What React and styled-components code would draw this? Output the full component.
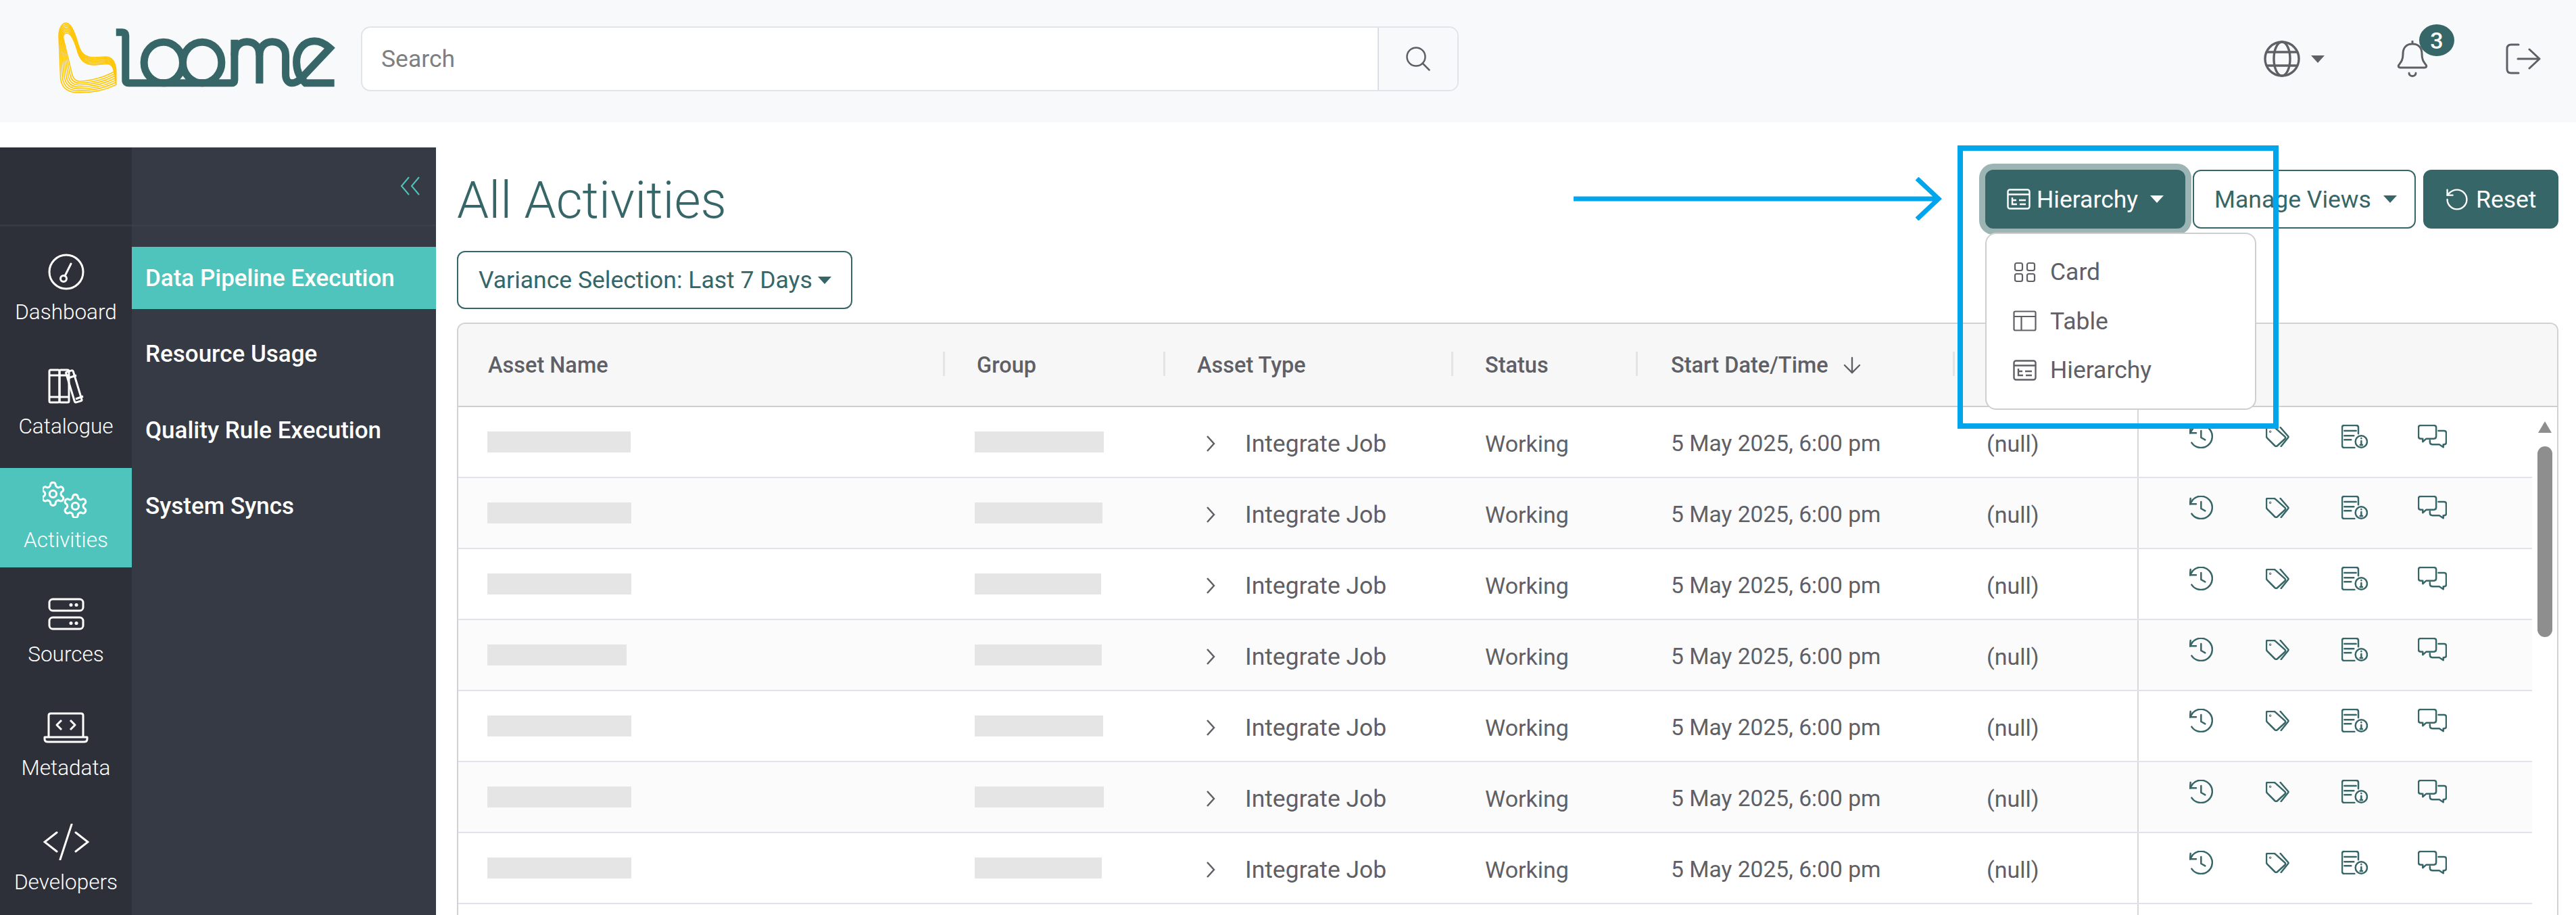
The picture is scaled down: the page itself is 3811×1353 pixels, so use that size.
import React from 'react';
import styled, { createGlobalStyle } from 'styled-components';
import { ArrowDown } from 'lucide-react';

const GlobalStyle = createGlobalStyle`
  html, body {
    margin: 0;
    padding: 0;
    height: 100%;
    overflow: hidden;
    background: #fff;
    font-family: Roboto, "Liberation Sans", sans-serif;
  }
  * { box-sizing: border-box; }
`;

const Page = styled.div`
  display: flex;
  flex-direction: column;
  height: 100vh;
  overflow: hidden;
`;

// Top bar
const TopBar = styled.header`
  flex: none;
  display: flex;
  align-items: center;
  height: 181px;
  padding: 0 0 7px 85px;
  background: #f8f9fb;
`;

const LogoSvg = styled.svg`
  flex: none;
  width: 412px;
  height: 107px;
  margin-right: 37px;
  margin-bottom: 3px;
`;

const SearchBox = styled.div`
  display: flex;
  width: 1624px;
  height: 96px;
  background: #fff;
  border: 2px solid #e2e4ea;
  border-radius: 14px;
`;

const SearchInput = styled.div`
  flex: 1;
  display: flex;
  align-items: center;
  padding-left: 28px;
  font-size: 35.5px;
  color: #7f7f7f;
`;

const SearchButton = styled.div`
  flex: none;
  display: flex;
  align-items: center;
  justify-content: center;
  width: 118px;
  background: #f8f9fb;
  border-left: 2px solid #dcdee5;
  border-radius: 0 12px 12px 0;
  color: #5f6066;
`;

const TopActions = styled.div`
  margin-left: auto;
  display: flex;
  align-items: center;
  padding-right: 52px;
`;

const Caret = styled.span`
  display: inline-block;
  width: 0;
  height: 0;
  border-left: 10px solid transparent;
  border-right: 10px solid transparent;
  border-top: 11px solid currentColor;
`;

const HierarchyCaret = styled(Caret)`
  margin-left: 9px;
`;

const GlobeWrap = styled.div`
  display: flex;
  align-items: center;
  gap: 16px;
  color: #5f6066;
  margin-right: 107px;
`;

const BellWrap = styled.div`
  position: relative;
  display: flex;
  margin-right: 115px;
  color: #5f6066;
`;

const Badge = styled.span`
  position: absolute;
  top: -24px;
  left: 33px;
  width: 52px;
  height: 47px;
  display: flex;
  align-items: center;
  justify-content: center;
  border-radius: 50%;
  background: #366667;
  color: #fff;
  font-size: 34px;
  font-weight: 500;
`;

// Body
const Content = styled.div`
  flex: 1;
  min-height: 0;
  display: flex;
  margin-top: 37px;
`;

const IconRail = styled.nav`
  flex: none;
  width: 195px;
  background: #2e3039;
`;

const RailTop = styled.div`
  height: 117px;
  border-bottom: 3px solid #363a45;
  margin-bottom: 20px;
`;

const RailItem = styled.div`
  height: 147px;
  margin-bottom: 21.5px;
  padding-top: 17px;
  display: flex;
  flex-direction: column;
  align-items: center;
  color: #fff;
  font-size: 31.5px;
  font-weight: 300;
  background: ${(p) => (p.$active ? '#4fc4bc' : 'transparent')};
`;

const RailIcon = styled.div`
  height: 60px;
  display: flex;
  align-items: center;
  justify-content: center;
  margin-bottom: 11px;
`;

const SubNav = styled.nav`
  flex: none;
  width: 450px;
  background: #363a45;
`;

const SubTop = styled.div`
  height: 117px;
  border-bottom: 3px solid #3b3f4a;
  margin-bottom: 30px;
  display: flex;
  justify-content: flex-end;
  padding: 43px 23px 0 0;
`;

const SubItem = styled.div`
  height: 92px;
  margin-bottom: 20.5px;
  padding-left: 20px;
  display: flex;
  align-items: center;
  color: #fff;
  font-size: 35px;
  font-weight: 500;
  background: ${(p) => (p.$active ? '#4fc4bc' : 'transparent')};
`;

const Main = styled.main`
  flex: 1;
  min-width: 0;
  display: flex;
  flex-direction: column;
  padding: 33px 26px 0 31px;
`;

const TitleRow = styled.div`
  flex: none;
  display: flex;
  justify-content: space-between;
  align-items: center;
  height: 87px;
`;

const Title = styled.h1`
  margin: 0;
  padding-top: 3px;
  font-size: 75.5px;
  line-height: 87px;
  font-weight: 300;
  color: #366667;
`;

const Toolbar = styled.div`
  display: flex;
  align-items: center;
`;

const Button = styled.div`
  display: inline-flex;
  align-items: center;
  height: ${(p) => p.$h || 87}px;
  font-size: 35.5px;
  white-space: nowrap;
  border-radius: 12px;
  border: 2px solid #366667;
  color: ${(p) => (p.$solid ? '#fff' : '#366667')};
  background: ${(p) => (p.$solid ? '#366667' : '#fff')};
  box-shadow: ${(p) => (p.$focus ? '0 0 0 9px #9cb4b4' : 'none')};
`;

const HierarchyWrap = styled.div`
  position: relative;
  margin-right: 11px;
`;

const HierarchyButton = styled(Button)`
  width: 296px;
  padding-left: 30px;
  gap: 9px;
`;

const ManageButton = styled(Button)`
  width: 330px;
  padding-left: 30px;
  gap: 18px;
  margin-right: 11px;
`;

const ResetButton = styled(Button)`
  width: 200px;
  padding-left: 32px;
  gap: 12px;
`;

const Dropdown = styled.div`
  position: absolute;
  z-index: 5;
  top: 93px;
  left: 0;
  width: 401px;
  height: 262px;
  padding-top: 20px;
  background: #fff;
  border: 2px solid #cfcfcf;
  border-radius: 16px;
`;

const DropItem = styled.div`
  height: 72.5px;
  display: flex;
  align-items: center;
  gap: 20px;
  padding-left: 39px;
  font-size: 35.5px;
  color: #5f6066;
`;

const Highlight = styled.div`
  position: absolute;
  z-index: 6;
  top: -36px;
  left: -41px;
  width: 475px;
  height: 419px;
  border: 8px solid #00a5ec;
  pointer-events: none;
`;

const ArrowSvg = styled.svg`
  position: absolute;
  z-index: 6;
  top: 11px;
  left: -609px;
`;

const VarianceButton = styled(Button)`
  flex: none;
  align-self: flex-start;
  width: 585px;
  padding-left: 30px;
  gap: 8px;
  margin-top: 33px;
  margin-bottom: 20px;
`;

// Table
const Table = styled.div`
  flex: 1;
  min-height: 0;
  overflow: hidden;
  display: flex;
  flex-direction: column;
  border: 2px solid #d2d2d2;
  border-bottom: none;
  border-radius: 12px 12px 0 0;
`;

const COLUMNS = '720px 326px 426px 273px 469px 270px 1fr';

const HeadRow = styled.div`
  flex: none;
  display: grid;
  grid-template-columns: ${COLUMNS};
  height: 123px;
  background: #f7f7f7;
  border-bottom: 2px solid #cfcfcf;
`;

const HeadCell = styled.div`
  position: relative;
  display: flex;
  align-items: center;
  gap: 16px;
  padding-left: ${(p) => p.$pad || 47}px;
  font-size: 32.5px;
  font-weight: 500;
  color: #5f6066;
  &::after {
    content: '';
    display: ${(p) => (p.$last ? 'none' : 'block')};
    position: absolute;
    right: 0;
    top: 41px;
    width: 3px;
    height: 36px;
    background: #e4e4e4;
  }
`;

const TableBody = styled.div`
  flex: 1;
  min-height: 0;
  display: flex;
`;

const Rows = styled.div`
  flex: 1;
  min-width: 0;
`;

const Row = styled.div`
  display: grid;
  grid-template-columns: ${COLUMNS};
  height: 105px;
  border-bottom: 2px solid #e0e3ee;
  background: ${(p) => (p.$alt ? '#fbfbfc' : '#fff')};
`;

const Cell = styled.div`
  display: flex;
  align-items: center;
  padding-left: ${(p) => p.$pad || 47}px;
  padding-top: 4px;
  font-size: ${(p) => p.$size || 34}px;
  color: #5f6066;
  white-space: nowrap;
`;

const BlankRow = styled(Row)`
  grid-template-columns: 2484px 1fr;
`;

const Skeleton = styled.div`
  height: 31px;
  margin-bottom: 4px;
  background: #e5e5e5;
`;

const Chevron = styled.svg`
  flex: none;
  margin-right: 44px;
`;

const ActionsCell = styled.div`
  display: grid;
  grid-template-columns: repeat(4, 112.5px);
  align-items: center;
  padding: 0 0 16px 75px;
  border-left: 2px solid #d8d8d8;
  color: #366667;
`;

const ScrollRail = styled.div`
  flex: none;
  width: 37px;
  display: flex;
  flex-direction: column;
  align-items: center;
  padding-top: 21px;
`;

const ScrollArrow = styled.div`
  width: 0;
  height: 0;
  border-left: 10px solid transparent;
  border-right: 10px solid transparent;
  border-bottom: 17px solid #8e8e8e;
  margin-bottom: 20px;
`;

const ScrollThumb = styled.div`
  width: 22px;
  height: 282px;
  border-radius: 11px;
  background: #8e8e8e;
`;

// Logo
const lerp = (a, b, t) => a + (b - a) * t;
const ribbonOuter = [76, 130, 76, 95, 90, 72, 108, 72, 130, 72, 145, 110, 160, 160, 172, 205, 190, 225, 235, 225, 285, 222, 315, 222, 330, 250, 330, 290, 330, 345, 280, 370, 230, 380, 170, 380, 115, 382, 90, 360, 84, 320];
const ribbonInner = [95, 135, 95, 125, 100, 117, 112, 117, 130, 117, 145, 150, 157, 190, 168, 235, 190, 257, 235, 257, 290, 252, 305, 252, 318, 265, 320, 285, 320, 288, 280, 310, 220, 328, 170, 330, 150, 330, 140, 318, 135, 300];

const ribbonPath = (t) => {
  const p = ribbonOuter.map((v, i) => lerp(v, ribbonInner[i], t).toFixed(1));
  return `M${p[0]} ${p[1]} C${p[2]} ${p[3]} ${p[4]} ${p[5]} ${p[6]} ${p[7]} C${p[8]} ${p[9]} ${p[10]} ${p[11]} ${p[12]} ${p[13]} C${p[14]} ${p[15]} ${p[16]} ${p[17]} ${p[18]} ${p[19]} L${p[20]} ${p[21]} C${p[22]} ${p[23]} ${p[24]} ${p[25]} ${p[26]} ${p[27]} L${p[28]} ${p[29]} C${p[30]} ${p[31]} ${p[32]} ${p[33]} ${p[34]} ${p[35]} C${p[36]} ${p[37]} ${p[38]} ${p[39]} ${p[40]} ${p[41]} Z`;
};

const Logo = () => (
  <LogoSvg viewBox="70 66 1235 320" role="img" aria-label="Loome">
    <g fill="none" stroke="#ffc60a" strokeWidth="4.8">
      {[0, 1, 2, 3, 4, 5, 6].map((i) => (
        <path key={i} d={ribbonPath(i / 6)} />
      ))}
    </g>
    <g fill="none" stroke="#366667" strokeWidth="33">
      <path d="M330 113 H358 Q372 113 372 127 V325 Q372 338 386 338 H842 Q855 338 855 325 V146" />
      <ellipse cx="540" cy="247" rx="86" ry="91" />
      <ellipse cx="712" cy="247" rx="86" ry="91" />
      <path d="M855 215 C855 175 880 155 910 155 C945 155 966 178 966 215 V340" />
      <path d="M966 215 C966 178 990 155 1022 155 C1058 155 1082 180 1082 215 V300 C1082 325 1095 338 1110 338 C1125 338 1138 330 1150 318 L1278 183 C1255 162 1232 152 1210 152 C1160 152 1130 195 1130 245 C1130 285 1145 315 1170 338 H1298" />
    </g>
  </LogoSvg>
);

// Icons
const Globe = () => (
  <svg width="54" height="54" viewBox="0 0 54 54" fill="none" stroke="currentColor" strokeWidth="3.4">
    <circle cx="27" cy="27" r="25" />
    <ellipse cx="27" cy="27" rx="12" ry="25" />
    <path d="M5 17 H49 M5 37 H49" />
  </svg>
);

const Bell = () => (
  <svg width="46" height="54" viewBox="0 0 46 54" fill="none" stroke="currentColor" strokeWidth="3" strokeLinecap="round">
    <path d="M23 1 V5 M23 5 C13 5 9 12 9 20 C9 29 6 32 3 36 C1.500 38 2.500 40 5 40 H41 C43.500 40 44.500 38 43 36 C40 32 37 29 37 20 C37 12 33 5 23 5 Z" />
    <path d="M18 48 C18 54 28 54 28 48" />
  </svg>
);

const LogoutIcon = () => (
  <svg width="52" height="46" viewBox="0 0 52 46" fill="none" stroke="#5f6066" strokeWidth="3" strokeLinecap="round" strokeLinejoin="round">
    <path d="M19 2 H8 Q2 2 2 8 V38 Q2 44 8 44 H19" />
    <path d="M18 23 H50 M35 9 L50 23 L35 37" />
  </svg>
);

const SearchIcon = () => (
  <svg width="36" height="36" viewBox="0 0 36 36" fill="none" stroke="currentColor" strokeWidth="2.500" strokeLinecap="round">
    <circle cx="15" cy="15" r="13.500" />
    <path d="M24.500 24.500 L34.500 34.500" />
  </svg>
);

const Collapse = () => (
  <svg width="30" height="28" viewBox="0 0 30 28" fill="none" stroke="#4fc4bc" strokeWidth="2">
    <path d="M13 1 L2 14 L13 27 M28 1 L17 14 L28 27" />
  </svg>
);

const GaugeIcon = () => (
  <svg width="54" height="54" viewBox="0 0 54 54" fill="none" stroke="#fff" strokeWidth="3" strokeLinecap="round">
    <circle cx="27" cy="27" r="25" />
    <circle cx="23" cy="37" r="4.500" />
    <path d="M25 33 L34 15" />
  </svg>
);

const BooksIcon = () => (
  <svg width="54" height="54" viewBox="0 0 54 54" fill="none" stroke="#fff" strokeWidth="3" strokeLinejoin="round">
    <rect x="2" y="3" width="15" height="48" rx="2" />
    <rect x="17" y="3" width="14" height="48" rx="2" />
    <path d="M2 11 H31 M2 43 H31" />
    <rect x="33" y="4" width="11" height="47" rx="2" transform="rotate(-17 38 28)" />
    <path d="M30 15 L42 11 M41 46 L52 42" />
  </svg>
);

const GEAR = 'M12.22 2h-.44a2 2 0 0 0-2 2v.18a2 2 0 0 1-1 1.73l-.43.25a2 2 0 0 1-2 0l-.15-.08a2 2 0 0 0-2.73.73l-.22.38a2 2 0 0 0 .73 2.73l.15.1a2 2 0 0 1 1 1.72v.51a2 2 0 0 1-1 1.74l-.15.09a2 2 0 0 0-.73 2.73l.22.38a2 2 0 0 0 2.73.73l.15-.08a2 2 0 0 1 2 0l.43.25a2 2 0 0 1 1 1.73V20a2 2 0 0 0 2 2h.44a2 2 0 0 0 2-2v-.18a2 2 0 0 1 1-1.73l.43-.25a2 2 0 0 1 2 0l.15.08a2 2 0 0 0 2.73-.73l.22-.39a2 2 0 0 0-.73-2.73l-.15-.08a2 2 0 0 1-1-1.74v-.5a2 2 0 0 1 1-1.74l.15-.09a2 2 0 0 0 .73-2.73l-.22-.38a2 2 0 0 0-2.73-.73l-.15.08a2 2 0 0 1-2 0l-.43-.25a2 2 0 0 1-1-1.73V4a2 2 0 0 0-2-2z';

const GearsIcon = () => (
  <svg width="70" height="54" viewBox="3 0 70 54" fill="none" stroke="#fff" strokeWidth="1.800">
    <g transform="translate(-2 -2) scale(1.700)">
      <path d={GEAR} />
      <circle cx="12" cy="12" r="3" />
    </g>
    <g transform="translate(31 16) scale(1.700)">
      <path d={GEAR} />
      <circle cx="12" cy="12" r="3" />
    </g>
  </svg>
);

const ServerIcon = () => (
  <svg width="54" height="48" viewBox="0 0 54 48" fill="none" stroke="#fff" strokeWidth="3">
    <rect x="2" y="2" width="50" height="17" rx="5" />
    <rect x="2" y="29" width="50" height="17" rx="5" />
    <g fill="#fff" stroke="none">
      <circle cx="34" cy="10.500" r="2.500" />
      <circle cx="42" cy="10.500" r="2.500" />
      <circle cx="34" cy="37.500" r="2.500" />
      <circle cx="42" cy="37.500" r="2.500" />
    </g>
  </svg>
);

const LaptopIcon = () => (
  <svg width="67" height="46" viewBox="0 0 67 46" fill="none" stroke="#fff" strokeWidth="3" strokeLinejoin="round">
    <path d="M8 36 V5 Q8 2 11 2 H56 Q59 2 59 5 V36" />
    <path d="M2 37 H65 V40 Q65 44 60 44 H7 Q2 44 2 40 Z" />
    <path d="M27 12 L20 19 L27 26 M40 12 L47 19 L40 26" />
  </svg>
);

const CodeIcon = () => (
  <svg width="68" height="54" viewBox="0 0 68 54" fill="none" stroke="#fff" strokeWidth="3" strokeLinecap="round">
    <path d="M20 13 L2 27 L20 41 M48 13 L66 27 L48 41 M42 1 L25 53" />
  </svg>
);

const HierarchyIcon = ({ color }) => (
  <svg width="35" height="31" viewBox="0 0 35 31" fill="none" stroke={color} strokeWidth="2.4">
    <rect x="1.500" y="1.500" width="32" height="28" rx="3" />
    <path d="M1.500 8.500 H33.500 M8 13 V23 H15 M8 17 H14 M18 17 H28 M19 23 H28" />
  </svg>
);

const CardIcon = () => (
  <svg width="35" height="31" viewBox="0 0 35 31" fill="none" stroke="#5f6066" strokeWidth="2.2">
    <rect x="3" y="2" width="11" height="11" rx="2.500" />
    <rect x="21" y="2" width="11" height="11" rx="2.500" />
    <rect x="3" y="18" width="11" height="11" rx="2.500" />
    <rect x="21" y="18" width="11" height="11" rx="2.500" />
  </svg>
);

const TableIcon = () => (
  <svg width="35" height="31" viewBox="0 0 35 31" fill="none" stroke="#5f6066" strokeWidth="2.2">
    <rect x="1.500" y="1.500" width="32" height="28" rx="2" />
    <path d="M1.500 9 H33.500 M12.500 9 V29.500" />
  </svg>
);

const ResetIcon = () => (
  <svg width="32" height="32" viewBox="2 2 20 20" fill="none" stroke="#fff" strokeWidth="1.500" strokeLinecap="round" strokeLinejoin="round">
    <path d="M3 12a9 9 0 1 0 9-9 9.750 9.750 0 0 0-6.740 2.740L3 8" />
    <path d="M3 3v5h5" />
  </svg>
);

// the four row icons are drawn in 3x units of the 35px originals
const HistoryIcon = () => (
  <svg width="35" height="35" viewBox="0 0 105 105" fill="none" stroke="currentColor" strokeWidth="7.500" strokeLinecap="round" strokeLinejoin="round">
    <path d="M10 80 A50 50 0 1 0 15 18 L3 37" />
    <path d="M5 12 L3 37 L30 37" />
    <path d="M52 27 V57 L70 67" />
  </svg>
);

const TagsIcon = () => (
  <svg width="35" height="30" viewBox="0 0 105 90" fill="none" stroke="currentColor" strokeWidth="7.500" strokeLinecap="round" strokeLinejoin="round">
    <path d="M8 3 H35 Q40 3 44 7 L85 44 Q90 49 85 54 L52 84 Q46 89 40 84 L6 50 Q3 46 3 42 V8 Q3 3 8 3 Z" />
    <path d="M65 3 L99 42 Q102 45 99 49 L68 87" />
    <circle cx="20" cy="22" r="1.500" />
  </svg>
);

const DocInfoIcon = () => (
  <svg width="39" height="35" viewBox="0 0 117 105" fill="none" stroke="currentColor" strokeWidth="7.500" strokeLinecap="round" strokeLinejoin="round">
    <path d="M75 40 V12 Q75 3 65 3 H12 Q3 3 3 12 V92 Q3 102 12 102 H58" />
    <path d="M13 27 H65 M13 49 H55 M13 67 H43" />
    <circle cx="88" cy="75" r="26" />
    <path d="M88 72 V90 M83 90 H93 M88 60 V61" />
  </svg>
);

const ChatIcon = () => (
  <svg width="43" height="35" viewBox="0 0 130 105" fill="none" stroke="currentColor" strokeWidth="7.500" strokeLinecap="round" strokeLinejoin="round">
    <path d="M12 3 H72 Q82 3 82 12 V52 Q82 62 72 62 H38 L22 76 V62 H12 Q3 62 3 52 V12 Q3 3 12 3 Z" />
    <path d="M92 27 H118 Q127 27 127 37 V78 Q127 88 118 88 H114 V100 L96 88 H66 Q54 88 54 76 V70" />
  </svg>
);

const RAIL = [
  { label: 'Dashboard', icon: <GaugeIcon /> },
  { label: 'Catalogue', icon: <BooksIcon /> },
  { label: 'Activities', icon: <GearsIcon />, active: true },
  { label: 'Sources', icon: <ServerIcon /> },
  { label: 'Metadata', icon: <LaptopIcon /> },
  { label: 'Developers', icon: <CodeIcon /> },
];

const SUB = ['Data Pipeline Execution', 'Resource Usage', 'Quality Rule Execution', 'System Syncs'];

// widths of the blanked out names and groups, these differ a little per row
const ROWS = [
  [212, 191], [213, 189], [213, 187], [206, 188], [213, 190], [213, 191], [213, 188],
];

const App = () => (
  <Page>
    <GlobalStyle />
    <TopBar>
      <Logo />
      <SearchBox>
        <SearchInput>Search</SearchInput>
        <SearchButton><SearchIcon /></SearchButton>
      </SearchBox>
      <TopActions>
        <GlobeWrap>
          <Globe />
          <Caret />
        </GlobeWrap>
        <BellWrap>
          <Bell />
          <Badge>3</Badge>
        </BellWrap>
        <LogoutIcon />
      </TopActions>
    </TopBar>
    <Content>
      <IconRail>
        <RailTop />
        {RAIL.map((item) => (
          <RailItem key={item.label} $active={item.active}>
            <RailIcon>{item.icon}</RailIcon>
            {item.label}
          </RailItem>
        ))}
      </IconRail>
      <SubNav>
        <SubTop><Collapse /></SubTop>
        {SUB.map((label, i) => (
          <SubItem key={label} $active={i === 0}>{label}</SubItem>
        ))}
      </SubNav>
      <Main>
        <TitleRow>
          <Title>All Activities</Title>
          <Toolbar>
            <HierarchyWrap>
              <HierarchyButton $solid $focus>
                <HierarchyIcon color="#fff" />
                Hierarchy
                <HierarchyCaret />
              </HierarchyButton>
              <Dropdown>
                <DropItem><CardIcon />Card</DropItem>
                <DropItem><TableIcon />Table</DropItem>
                <DropItem><HierarchyIcon color="#5f6066" />Hierarchy</DropItem>
              </Dropdown>
              <Highlight />
              <ArrowSvg width="545" height="64" viewBox="0 0 545 64" fill="none" stroke="#00a5ec" strokeWidth="7">
                <path d="M0 32 H538 M508 2 L540 32 L508 62" />
              </ArrowSvg>
            </HierarchyWrap>
            <ManageButton>
              Manage Views
              <Caret />
            </ManageButton>
            <ResetButton $solid>
              <ResetIcon />
              Reset
            </ResetButton>
          </Toolbar>
        </TitleRow>
        <VarianceButton $h={86}>
          Variance Selection: Last 7 Days
          <Caret />
        </VarianceButton>
        <Table>
          <HeadRow>
            <HeadCell $pad={44}>Asset Name</HeadCell>
            <HeadCell>Group</HeadCell>
            <HeadCell>Asset Type</HeadCell>
            <HeadCell>Status</HeadCell>
            <HeadCell $pad={49}>
              Start Date/Time
              <ArrowDown size={38} strokeWidth={1.5} />
            </HeadCell>
            <HeadCell />
            <HeadCell $last />
          </HeadRow>
          <TableBody>
            <Rows>
              {ROWS.map(([nameW, groupW], i) => (
                <Row key={i} $alt={i % 2 === 1}>
                  <Cell $pad={43}><Skeleton style={{ width: nameW }} /></Cell>
                  <Cell $pad={44}><Skeleton style={{ width: groupW }} /></Cell>
                  <Cell $pad={60} $size={35.5}>
                    <Chevron width="14" height="24" viewBox="0 0 14 24" fill="none" stroke="#5f6066" strokeWidth="2.500">
                      <path d="M2 1 L12 12 L2 23" />
                    </Chevron>
                    Integrate Job
                  </Cell>
                  <Cell>Working</Cell>
                  <Cell $pad={49} $size={33.6}>5 May 2025, 6:00 pm</Cell>
                  <Cell>(null)</Cell>
                  <ActionsCell>
                    <HistoryIcon />
                    <TagsIcon />
                    <DocInfoIcon />
                    <ChatIcon />
                  </ActionsCell>
                </Row>
              ))}
              {/* the next row only just starts at the bottom of the window */}
              <BlankRow>
                <div />
                <ActionsCell />
              </BlankRow>
            </Rows>
            <ScrollRail>
              <ScrollArrow />
              <ScrollThumb />
            </ScrollRail>
          </TableBody>
        </Table>
      </Main>
    </Content>
  </Page>
);

export default App;
